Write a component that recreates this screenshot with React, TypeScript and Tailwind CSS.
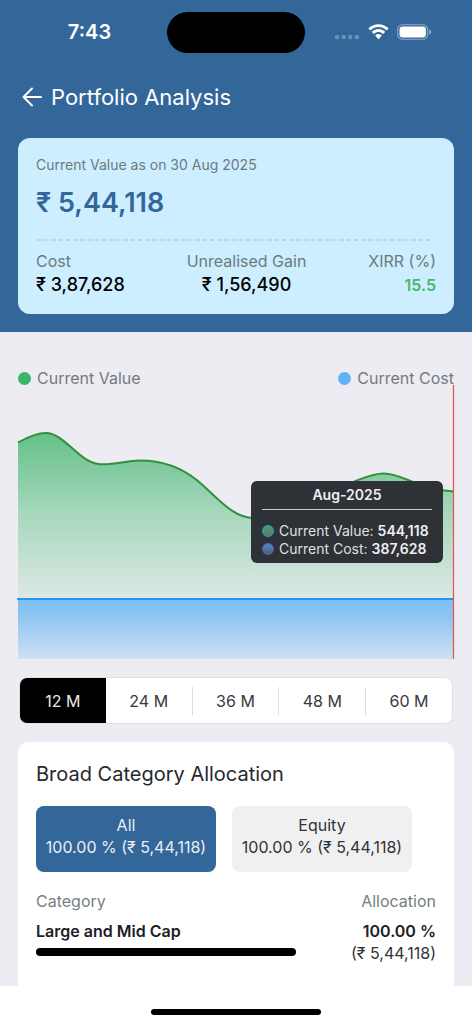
import { useState } from "react";

const periods = ["12 M", "24 M", "36 M", "48 M", "60 M"];
const tabs = ["All", "Equity"];

function StatusBar() {
  return (
    <div className="grid h-16 grid-cols-[1fr_138px_1fr] items-center">
      <div className="pl-3 text-center text-xl leading-6 font-semibold">7:43</div>
      <div className="h-[41px] rounded-full bg-black" />
      <div className="flex items-center justify-start gap-2 pl-[30px]">
        <svg width="25" height="20" viewBox="0 0 25 20" fill="#fff" opacity="0.27" aria-hidden="true">
          <rect x="0" y="13" width="4.2" height="4.2" rx="1.4" />
          <rect x="6.6" y="13" width="4.2" height="4.2" rx="1.4" />
          <rect x="13.2" y="13" width="4.2" height="4.2" rx="1.4" />
          <rect x="19.8" y="13" width="4.2" height="4.2" rx="1.4" />
        </svg>
        <svg width="21" height="16" viewBox="0 0 21 16" fill="#fff" aria-hidden="true">
          <path d="M10.5 3.1c2.9 0 5.6 1.1 7.7 3.1.2.2.4.2.6 0l1.5-1.5c.2-.2.2-.5 0-.7C17.6 1.5 14.2.2 10.5.2S3.4 1.5.7 4c-.2.2-.2.5 0 .7l1.5 1.5c.2.2.4.2.6 0 2.1-2 4.8-3.1 7.7-3.1z" />
          <path d="M10.5 8.1c1.6 0 3.1.6 4.3 1.7.2.2.4.2.6 0l1.5-1.5c.2-.2.2-.5 0-.7-1.7-1.6-4-2.5-6.4-2.5s-4.7.9-6.4 2.5c-.2.2-.2.5 0 .7l1.5 1.5c.2.2.4.2.6 0 1.2-1.1 2.7-1.7 4.3-1.7z" />
          <path d="M13.5 11.7c.2-.2.2-.5 0-.7-.8-.7-1.9-1.1-3-1.1s-2.2.4-3 1.1c-.2.2-.2.5 0 .7l2.6 3.2c.2.3.6.3.8 0z" />
        </svg>
        <svg width="35" height="16" viewBox="0 0 35 16" fill="none" aria-hidden="true">
          <rect x="0.7" y="0.7" width="30" height="14.6" rx="4.8" stroke="#fff" strokeOpacity="0.45" strokeWidth="1.1" />
          <rect x="2.5" y="2.5" width="26.4" height="11" rx="3.2" fill="#fff" />
          <path d="M32.3 5.3c1 .4 1.7 1.4 1.7 2.7s-.7 2.3-1.7 2.7z" fill="#fff" fillOpacity="0.5" />
        </svg>
      </div>
    </div>
  );
}

function SummaryCard() {
  return (
    <section className="mx-[18px] rounded-xl bg-[#cceeff] px-[18px] py-[17px]">
      <p className="text-sm leading-5 text-[#6c7a7d]">Current Value as on 30 Aug 2025</p>
      <p className="mt-3 text-[27px] leading-8 font-semibold text-[#336699]">₹ 5,44,118</p>
      <svg className="mt-5 block w-full" height="2" aria-hidden="true">
        <line x1="1" y1="1" x2="99.5%" y2="1" stroke="#c3c8cb" strokeWidth="1.5" strokeDasharray="4.5 2.7" />
      </svg>
      <dl className="mt-2 flex justify-between">
        <div>
          <dt className="text-base leading-6 text-[#6c7a7d]">Cost</dt>
          <dd className="text-lg leading-6 font-medium text-black">₹ 3,87,628</dd>
        </div>
        <div className="text-center">
          <dt className="text-base leading-6 text-[#6c7a7d]">Unrealised Gain</dt>
          <dd className="text-lg leading-6 font-medium text-black">₹ 1,56,490</dd>
        </div>
        <div className="text-right">
          <dt className="text-base leading-6 text-[#6c7a7d]">XIRR (%)</dt>
          <dd className="text-base leading-6 font-semibold text-[#48b96d]">15.5</dd>
        </div>
      </dl>
    </section>
  );
}

const valueLine =
  "M0 58.5 C9 53.5 18 49 28 49 C46 49 60 77 80 80 C94 82 107 76.5 122 76.5 C144 76.5 163 83 180 97 C198 112 214 134 236 134 C278 134 336 89.5 366 89.5 C385 89.5 398 105 436 107.5";

function Chart() {
  return (
    <section className="relative px-[18px]">
      <div className="flex h-6 items-center justify-between text-base leading-6 text-[#737b7e]">
        <span className="flex items-center gap-1.5">
          <span className="size-[13px] rounded-full bg-[#3cb46a]" />
          Current Value
        </span>
        <span className="flex items-center gap-1.5">
          <span className="size-[13px] rounded-full bg-[#62b3f6]" />
          Current Cost
        </span>
      </div>
      <svg
        className="-mt-1.5 block h-[275px] w-full overflow-visible"
        viewBox="0 0 436 275"
        preserveAspectRatio="none"
        role="img"
        aria-label="Current value and current cost by month"
      >
        <defs>
          <linearGradient id="value" gradientUnits="userSpaceOnUse" x1="0" y1="49" x2="0" y2="215">
            <stop offset="0" stopColor="#63c189" />
            <stop offset="0.5" stopColor="#a9d8be" />
            <stop offset="1" stopColor="#dce8e4" />
          </linearGradient>
          <linearGradient id="cost" x1="0" y1="0" x2="0" y2="1">
            <stop offset="0" stopColor="#7bbff2" />
            <stop offset="0.25" stopColor="#8bc4f1" />
            <stop offset="1" stopColor="#cfe0f3" />
          </linearGradient>
        </defs>
        <path d={valueLine + " V215 H0 Z"} fill="url(#value)" />
        <rect x="0" y="215" width="436" height="60" fill="url(#cost)" />
        <path d={valueLine} fill="none" stroke="#338f3c" strokeWidth="2" />
        <path d="M-1 215 H436" stroke="#2196f3" strokeWidth="2" />
        <path d="M435.5 1 V275" stroke="#e8504d" strokeWidth="1.2" />
      </svg>
      <div
        role="tooltip"
        className="absolute top-[115px] right-[29px] h-[82px] w-48 rounded-md bg-[#2e3135] px-[11px] text-sm leading-[18px] text-[#dfe0e3]"
      >
        <p className="border-b border-[#c8cacc] pt-[5px] pb-[5px] text-center font-semibold text-[#eeeef2]">
          Aug-2025
        </p>
        <p className="mt-3 flex items-center gap-[5px] whitespace-nowrap">
          <span className="size-3 shrink-0 rounded-full border border-[#19a8c4] bg-linear-to-b from-[#4d9d69] to-[#627079]" />
          <span>
            Current Value: <b className="font-semibold text-[#eeeef2]">544,118</b>
          </span>
        </p>
        <p className="flex items-center gap-[5px] whitespace-nowrap">
          <span className="size-3 shrink-0 rounded-full border border-[#6b55c5] bg-linear-to-b from-[#4a8cc0] to-[#4d6079]" />
          <span>
            Current Cost: <b className="font-semibold text-[#eeeef2]">387,628</b>
          </span>
        </p>
      </div>
    </section>
  );
}

function PeriodPicker() {
  const [selected, setSelected] = useState(0);
  return (
    <div className="mx-[19px] mt-[18px] flex h-[47px] items-center overflow-hidden rounded-lg border border-[#e0e0e2] bg-white">
      {periods.map((label, i) => (
        <button
          key={label}
          type="button"
          aria-pressed={i === selected}
          onClick={() => setSelected(i)}
          className={
            i === selected
              ? "h-full flex-1 bg-black text-base text-[#e8e8ea]"
              : i === periods.length - 1
                ? "h-7 flex-1 text-base text-[#37393e]"
                : "h-7 flex-1 border-r border-[#dcdcde] text-base text-[#37393e]"
          }
        >
          {label}
        </button>
      ))}
    </div>
  );
}

function Allocation() {
  const [selected, setSelected] = useState(0);
  return (
    <section className="mx-[18px] mt-[18px] rounded-t-[10px] bg-white px-[18px] pt-[18px] pb-[22px]">
      <h2 className="text-xl leading-7 text-[#25282d]">Broad Category Allocation</h2>
      <div className="mt-[18px] flex gap-4">
        {tabs.map((label, i) => (
          <button
            key={label}
            type="button"
            aria-pressed={i === selected}
            onClick={() => setSelected(i)}
            className={
              i === selected
                ? "w-[45%] rounded-lg bg-[#336699] pt-2 pb-[14px] text-base leading-[22px] whitespace-nowrap text-[#e9eef5]"
                : "w-[45%] rounded-lg bg-[#f0f0f0] pt-2 pb-[14px] text-base leading-[22px] whitespace-nowrap text-[#303338]"
            }
          >
            {label}
            <br />
            100.00 % (₹ 5,44,118)
          </button>
        ))}
      </div>
      <table className="mt-4 w-full text-base leading-[22px] text-[#303338]">
        <thead>
          <tr className="text-[#757f80]">
            <th scope="col" className="pt-[2px] pb-2 text-left font-normal">Category</th>
            <th scope="col" className="pt-[2px] pb-2 text-right font-normal">Allocation</th>
          </tr>
        </thead>
        <tbody>
          <tr>
            <th scope="row" className="w-[65%] text-left align-top font-semibold text-[#1d2026]">
              Large and Mid Cap
              <div className="mt-[6px] h-2 rounded-full bg-black" />
            </th>
            <td className="text-right align-top whitespace-nowrap">
              <strong className="block font-semibold text-[#1d2026]">100.00 %</strong>
              (₹ 5,44,118)
            </td>
          </tr>
        </tbody>
      </table>
    </section>
  );
}

export default function App() {
  return (
    <div className="flex min-h-screen flex-col bg-white font-['Inter','Noto_Sans',sans-serif]">
      <header className="bg-[#336699] pb-[18px] text-white">
        <StatusBar />
        <div className="flex h-[74px] items-center gap-2 pb-[9px] pl-[21px]">
          <button type="button" aria-label="Back">
            <svg width="22" height="22" viewBox="0 0 22 22" fill="none" stroke="#fff" strokeWidth="2" strokeLinecap="round" strokeLinejoin="round" aria-hidden="true">
              <path d="M20 11H2.5M11 2.5L2.5 11L11 19.5" />
            </svg>
          </button>
          <h1 className="text-[22px] leading-7">Portfolio Analysis</h1>
        </div>
        <SummaryCard />
      </header>
      <main className="bg-[#edecf2] pt-[34px]">
        <Chart />
        <PeriodPicker />
        <Allocation />
      </main>
      <footer className="flex h-[38px] items-center justify-center pt-[14px]">
        <div className="h-[6px] w-[36%] rounded-full bg-black" />
      </footer>
    </div>
  );
}
